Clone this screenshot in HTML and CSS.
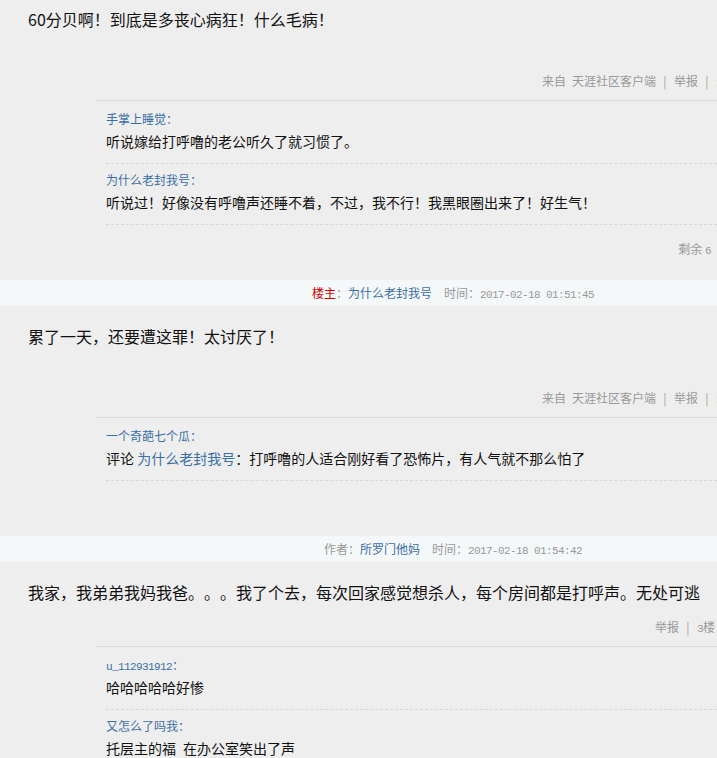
FILE: index.html
```html
<!DOCTYPE html>
<html lang="zh-CN">
<head>
  <meta charset="UTF-8">
  <title>天涯社区</title>
  <link rel="stylesheet" href="styles.css">
</head>
<body>
  <div class="thread">

    <!-- 1楼 -->
    <div class="post post-first">
      <div class="post-text post-text-tall">60分贝啊！到底是多丧心病狂！什么毛病！</div>
      <div class="post-foot post-foot-clipped">
        <span>来自</span><span class="client">天涯社区客户端</span><span class="sep">|</span><span>举报</span><span class="sep">|</span><span><span class="mono">1</span>楼</span>
      </div>
      <div class="replies">
        <div class="reply">
          <div class="reply-name">手掌上睡觉：</div>
          <div class="reply-text">听说嫁给打呼噜的老公听久了就习惯了。</div>
        </div>
        <div class="reply">
          <div class="reply-name">为什么老封我号：</div>
          <div class="reply-text">听说过！好像没有呼噜声还睡不着，不过，我不行！我黑眼圈出来了！好生气！</div>
        </div>
      </div>
      <div class="more">剩余 <span class="mono">6</span></div>
    </div>

    <div class="post-head">
      <span class="host">楼主</span>：<span class="user">为什么老封我号</span><span class="time">时间：<span class="mono">2017-02-18 01:51:45</span></span>
    </div>

    <!-- 2楼 -->
    <div class="post">
      <div class="post-text post-text-tall">累了一天，还要遭这罪！太讨厌了！</div>
      <div class="post-foot post-foot-clipped">
        <span>来自</span><span class="client">天涯社区客户端</span><span class="sep">|</span><span>举报</span><span class="sep">|</span><span><span class="mono">2</span>楼</span>
      </div>
      <div class="replies">
        <div class="reply">
          <div class="reply-name">一个奇葩七个瓜：</div>
          <div class="reply-text">评论 <span class="user">为什么老封我号</span>：打呼噜的人适合刚好看了恐怖片，有人气就不那么怕了</div>
        </div>
      </div>
      <div class="more"></div>
    </div>

    <div class="post-head">
      作者：<span class="user">所罗门他妈</span><span class="time">时间：<span class="mono">2017-02-18 01:54:42</span></span>
    </div>

    <!-- 3楼 -->
    <div class="post">
      <div class="post-text">我家，我弟弟我妈我爸。。。我了个去，每次回家感觉想杀人，每个房间都是打呼声。无处可逃</div>
      <div class="post-foot">
        <span>举报</span><span class="sep">|</span><span><span class="mono">3</span>楼</span>
      </div>
      <div class="replies">
        <div class="reply">
          <div class="reply-name"><span class="mono">u_112931912</span>：</div>
          <div class="reply-text">哈哈哈哈哈好惨</div>
        </div>
        <div class="reply">
          <div class="reply-name">又怎么了吗我：</div>
          <div class="reply-text">托层主的福&ensp;在办公室笑出了声</div>
        </div>
      </div>
    </div>

  </div>
</body>
</html>
```

FILE: styles.css
```css
html, body {
  overflow: hidden;
}
body {
  margin: 0;
  background: #eeeeee;
  color: #111;
  font-family: "Noto Sans CJK SC", sans-serif;
  text-spacing-trim: space-all;
}
.mono {
  font-family: "Liberation Mono", monospace;
  font-size: 11px;
  letter-spacing: -0.6px;
  line-height: 1;
}
.user {
  color: #3a6ea5;
}

.post {
  padding: 18px 0 21px;
}
.post-first {
  padding-top: 7px;
}
.post-text {
  padding: 0 0 13px 28px;
  font-size: 16px;
  line-height: 24px;
  white-space: nowrap;
}
.post-text-tall {
  min-height: 64px;
  padding-bottom: 0;
}
.post-foot {
  display: flex;
  justify-content: flex-end;
  height: 20px;
  margin-bottom: 9px;
  padding-right: 2px;
  font-size: 12px;
  line-height: 20px;
  color: #999;
  white-space: nowrap;
}
.post-foot-clipped {
  margin-right: -17px;
  padding-right: 0;
}
.client {
  margin-left: 6px;
}
.sep {
  display: inline-block;
  width: 18px;
  text-align: center;
  color: #a0a0a0;
}

.replies {
  margin-left: 96px;
  border-top: 1px solid #dcdcdc;
  padding: 2px 0 0 10px;
}
.reply {
  padding: 7px 0 11px;
  border-bottom: 1px dashed #d8d8d8;
}
.reply-name {
  height: 18px;
  font-size: 12px;
  line-height: 18px;
  color: #3a6ea5;
}
.reply-text {
  height: 22px;
  margin-top: 2px;
  font-size: 14px;
  line-height: 22px;
  white-space: nowrap;
}
.more {
  margin-top: 14px;
  height: 20px;
  padding-right: 6px;
  font-size: 12px;
  line-height: 20px;
  color: #999;
  text-align: right;
}

.post-head {
  height: 26px;
  padding-left: 189px;
  background: #f5f8f9;
  font-size: 12px;
  line-height: 26px;
  color: #999;
  text-align: center;
  white-space: nowrap;
}
.host {
  color: #cc0000;
}
.time {
  margin-left: 12px;
}
.time .mono {
  color: #999;
}
```
